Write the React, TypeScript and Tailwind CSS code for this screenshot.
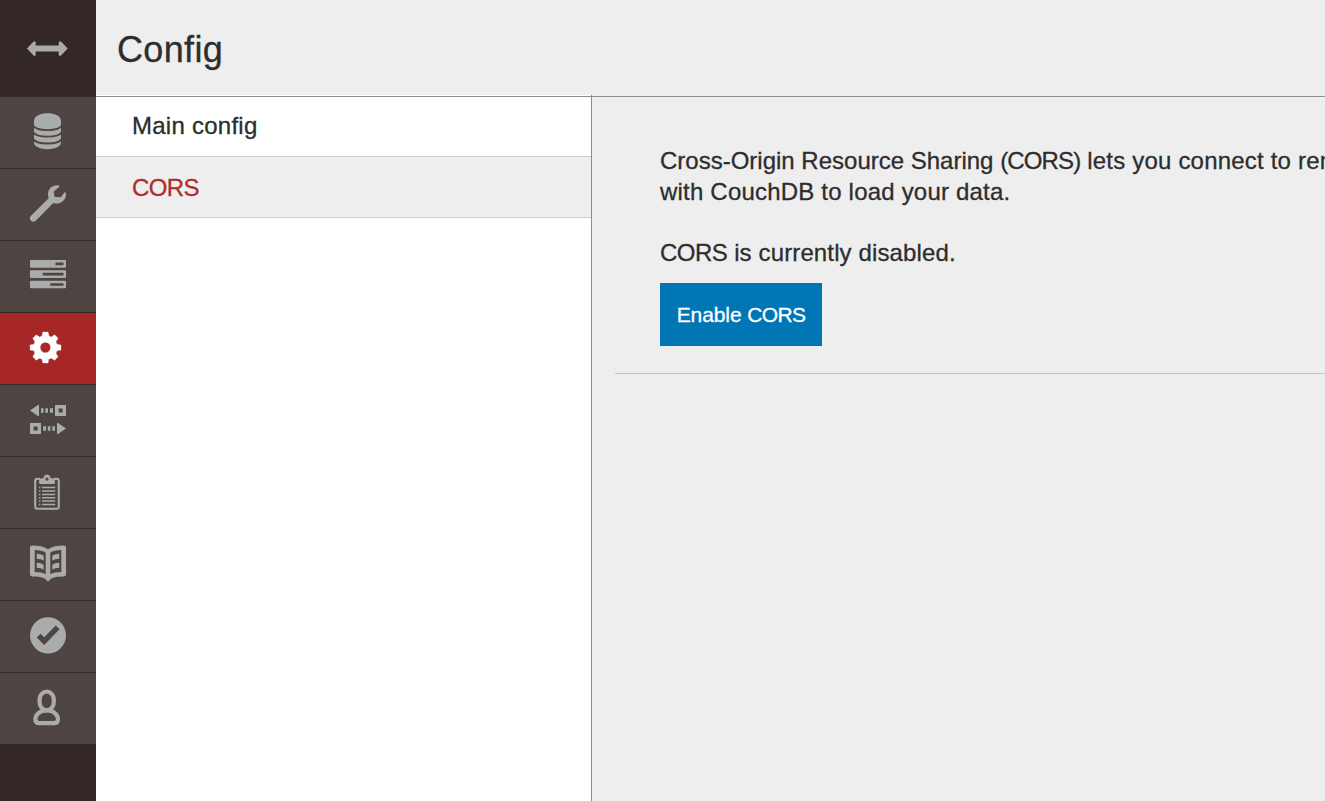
import type { ReactNode } from "react";

type NavItem = { name: string; active?: boolean; art: ReactNode };

const navItems: NavItem[] = [
  {
    name: "Databases",
    art: (
      <>
        <path d="M34 25C34 14.700 61 14.700 61 25V46.500C61 55.400 34 55.400 34 46.500Z" />
        <path d="M33 29.300C36.500 35.700 58.500 35.700 62 29.300M33 36C36.500 42.200 58.500 42.200 62 36M33 42.700C36.500 49 58.500 49 62 42.700" fill="none" stroke="#4e4442" strokeWidth="1.900" />
      </>
    ),
  },
  {
    name: "Setup",
    art: (
      <path d="M59.300 17.600C53 16.300 48 20.500 48 26.500C48 28 48.300 29.200 48.700 30.200L31 47.700C29.300 49.500 29.700 51.500 31 52.800C32.400 54.200 34.400 54 36 52.500L53.300 35C59.500 37 66.500 33 66 25.200L64.800 24L60.800 29.300L54.600 29L53.900 23.500L59.300 18.800Z" />
    ),
  },
  {
    name: "Active Tasks",
    art: (
      <path
        fillRule="evenodd"
        d="M31 20H65Q66 20 66 21V26.700Q66 27.700 65 27.700H31Q30 27.700 30 26.700V21Q30 20 31 20ZM55.500 22.600V25.200H63.500V22.600ZM31 30.200H65Q66 30.200 66 31.200V37Q66 38 65 38H31Q30 38 30 37V31.200Q30 30.200 31 30.200ZM42.800 32.800V35.400H63.500V32.800ZM31 40.700H65Q66 40.700 66 41.700V47.300Q66 48.300 65 48.300H31Q30 48.300 30 47.300V41.700Q30 40.700 31 40.700ZM50.300 43.200V45.800H63.500V43.200Z"
      />
    ),
  },
  {
    name: "Config",
    active: true,
    art: (
      <path
        fillRule="evenodd"
        d="M42.800 20H48.100L49 24L51.300 25L54.600 22.800L58.100 26.300L56 29.700L57 32.300L61 33V38L57 38.800L56 41.300L58.100 44.800L54.600 48.300L51.300 46.200L48.700 47.200L48.100 51H42.800L42 47.200L39.500 46.200L36.200 48.300L32.800 44.800L34.800 41.300L34 38.800L30 38V33L34 32.300L34.800 29.700L32.800 26.300L36.200 22.800L39.500 25L42 24ZM45.400 30.300A5.200 5.200 0 1 0 45.400 40.700A5.200 5.200 0 1 0 45.400 30.300Z"
        stroke="currentColor"
        strokeWidth="0.300"
        strokeLinejoin="round"
      />
    ),
  },
  {
    name: "Replication",
    art: (
      <>
        <path d="M30 26.500L38 21Q39 20.500 39 21.500V31.500Q39 32.500 38 32ZM66 44.500L58 39Q57 38.500 57 39.500V49.500Q57 50.500 58 50Z" />
        <path fillRule="evenodd" d="M55 21H66V32H55ZM58.600 24.500V28.500H62.700V24.500ZM30 39H41V50H30ZM33.500 42.500V46.500H37.700V42.500Z" />
        <path d="M41 24.300H43.500V28.700H41ZM45.400 24.300H48V28.700H45.400ZM50 24.300H53V28.700H50ZM43.100 42.300H46V46.700H43.100ZM47.800 42.300H50.400V46.700H47.800ZM52.300 42.300H54.900V46.700H52.300Z" />
      </>
    ),
  },
  {
    name: "Active operations",
    art: (
      <>
        <path
          fillRule="evenodd"
          d="M43.500 22.300C43.500 17.300 50.500 17.300 50.500 22.300H53Q54.800 22.800 55 26.500Q55 28 53.500 28H40.500Q39 28 39 26.500Q39.200 22.800 41 22.300ZM47 21.500A1.600 1.600 0 1 0 47 24.700A1.600 1.600 0 1 0 47 21.500Z"
        />
        <path d="M40 22.900H37.500Q35.200 22.900 35.200 25.300V50.500Q35.200 52.800 37.500 52.800H56.500Q58.800 52.800 58.800 50.500V25.300Q58.800 22.900 56.500 22.900H54" fill="none" stroke="currentColor" strokeWidth="2.100" />
        <path d="M39 31.500H40.400M39 35H40.400M39 38.400H40.400M39 41.700H40.400M39 45.100H40.400M39 48.500H40.400M42 31.500H55.200M42 35H55.200M42 38.400H55.200M42 41.700H55.200M42 45.100H55.200M42 48.500H55.200" stroke="currentColor" strokeWidth="1.500" />
      </>
    ),
  },
  {
    name: "Documentation",
    art: (
      <>
        <path
          fillRule="evenodd"
          d="M32 17.500C38 17.500 44 18.400 48 21.200C52 18.400 58 17.500 64 17.500Q66 17.500 66 19.500V46.500Q66 48.300 64 48.400C58 48.500 53 49 50.500 51Q49 53.300 48 53.300Q47 53.300 45.500 51C43 49 38 48.500 32 48.400Q30 48.300 30 46.500V19.500Q30 17.500 32 17.500ZM34.700 21.900V44.100C39 44.200 43 44.800 45.700 46.200V24.600C43 22.700 39 21.900 34.700 21.900ZM61.300 21.900C57 21.900 53 22.700 50.300 24.600V46.200C53 44.800 57 44.200 61.300 44.100Z"
        />
        <path d="M36.800 25.800Q41 26 43.700 27.800V32.600Q41 30.900 36.800 30.700ZM36.800 34.800Q41 35 43.700 36.800V41.600Q41 39.900 36.800 39.700ZM59.200 25.800Q55 26 52.300 27.800V32.600Q55 30.900 59.200 30.700ZM59.200 34.800Q55 35 52.300 36.800V41.600Q55 39.900 59.200 39.700Z" />
      </>
    ),
  },
  {
    name: "Verify",
    art: (
      <path
        fillRule="evenodd"
        d="M48 17.200A18 18.200 0 1 0 48 53.600A18 18.200 0 1 0 48 17.200ZM36.700 37.600L40.600 33.700L44.200 37.200L55.800 25.600L59.600 29.300L44.200 45Z"
      />
    ),
  },
  {
    name: "Your Account",
    art: (
      <g fill="none" stroke="currentColor" strokeWidth="4.200">
        <rect x="39.600" y="19.500" width="14.200" height="18.800" rx="7.100" ry="8" />
        <path d="M46.700 38.300C40 38.300 35.400 42.600 35.400 47.300Q35.400 51.200 39.200 51.200H54.200Q58 51.200 58 47.300C58 42.600 53.400 38.300 46.700 38.300Z" />
      </g>
    ),
  },
];

function Sidebar() {
  return (
    <nav className="flex w-24 shrink-0 flex-col bg-[#332826] text-[#a9acaa]">
      <button className="h-24 shrink-0" aria-label="Toggle menu">
        <svg viewBox="0 0 96 96" className="block size-24" fill="currentColor">
          <path d="M27 48.500L33.300 41.800Q35.700 40.200 35.700 43V45.400H58.700V43Q58.700 40.200 61.200 41.800L67.700 48.500L61.200 55.200Q58.700 57 58.700 54V51.600H35.700V54Q35.700 57 33.300 55.200Z" />
        </svg>
      </button>
      {navItems.map((item) => (
        <a
          key={item.name}
          aria-label={item.name}
          className={
            item.active
              ? "block h-[72px] border-t border-[#332826] bg-[#a72626] text-white"
              : "block h-[72px] border-t border-[#332826] bg-[#4e4442]"
          }
        >
          <svg viewBox="0 1 96 71" className="block h-[71px] w-24" fill="currentColor">
            {item.art}
          </svg>
        </a>
      ))}
    </nav>
  );
}

export default function App() {
  return (
    <div className="flex h-[801px] w-[1325px] overflow-hidden bg-[#eeeeee] font-['Liberation_Sans',Arial,sans-serif] text-2xl text-[#2d2d2d] [-webkit-text-stroke:0.3px]">
      <Sidebar />
      <div className="flex min-w-0 flex-1 flex-col">
        <header className="flex h-[95px] shrink-0 items-center pt-1 pl-[21px]">
          <h1 className="text-4xl tracking-[0.35px]">Config</h1>
        </header>
        <div className="flex min-h-0 flex-1">
          <div className="w-[496px] shrink-0 border-r border-[#8d8d8d] bg-white pt-px">
            <div className="h-[61px] border-t border-b border-t-[#8d8d8d] border-b-[#cccbd2] pl-9 leading-[57px] tracking-[0.25px]">Main config</div>
            <div className="h-[61px] border-b border-[#cccbd2] bg-[#eeeeee] pl-9 leading-[61px] tracking-[-0.6px] text-[#af2d2d]">CORS</div>
          </div>
          <main className="min-w-0 flex-1 overflow-hidden pt-px">
            <div className="border-t border-[#8d8d8d] pt-12 pl-[23px]">
              <div className="border-b border-[#c4c4c4] pb-[27px] pl-[45px]">
                <p className="leading-[31px] whitespace-nowrap">
                  Cross-Origin Resource Sharing <span className="tracking-[-0.85px]">(CORS)</span>
                  <span className="tracking-[0.2px]"> lets you connect to remote servers</span>
                  <br />
                  <span className="tracking-[0.2px]">with CouchDB to load your data.</span>
                </p>
                <p className="mt-[30px] leading-[31px]">
                  <span className="tracking-[-0.5px]">CORS</span>
                  <span className="tracking-[0.13px]"> is currently disabled.</span>
                </p>
                <button className="mt-[15px] block h-[63px] w-[162px] bg-[#0076b5] text-[21px] whitespace-nowrap text-white">
                  <span className="tracking-[-0.1px]">Enable </span>
                  <span className="tracking-[-0.65px]">CORS</span>
                </button>
              </div>
            </div>
          </main>
        </div>
      </div>
    </div>
  );
}
